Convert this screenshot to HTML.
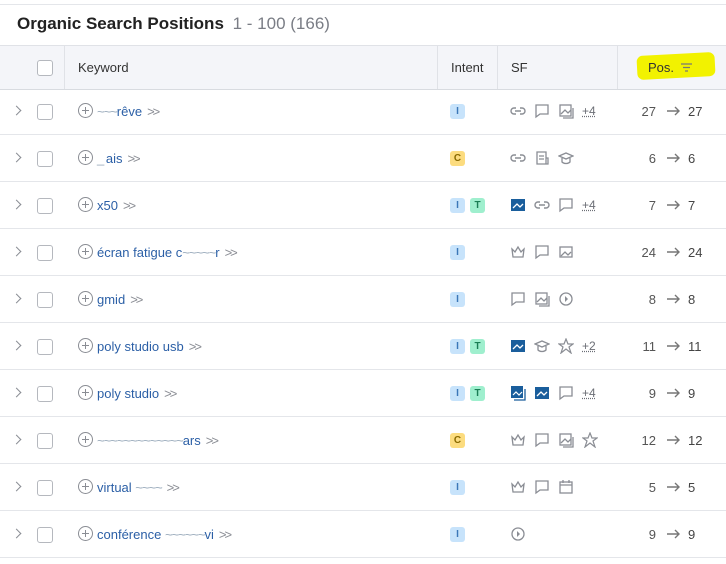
<!DOCTYPE html><html><head><meta charset="utf-8"><style>
body{margin:0;width:726px;height:564px;background:#fff;font-family:"Liberation Sans",sans-serif;overflow:hidden;position:relative}
.top{position:absolute;left:0;top:0;width:726px;height:4px;border-bottom:1px solid #e4e6ea}
.title{position:absolute;left:17px;top:14px;font-size:17px;font-weight:bold;color:#222}
.title span{font-weight:normal;color:#7a7d85;margin-left:4px}
.hdr{position:absolute;left:0;top:45px;width:726px;height:43px;background:#f4f5f9;border-top:1px solid #e0e2e7;border-bottom:1px solid #d8dbe0;font-size:13px;color:#333}
.hdr .t{position:absolute;top:14px}
.hdr .vl{position:absolute;top:0;height:43px;width:1px;background:#e0e2e7}
.row{position:absolute;left:0;width:726px;height:46px;border-bottom:1px solid #e4e6ea;font-size:13px}
.chev{position:absolute;left:13px;top:19px;width:6px;height:6px;border-right:1.5px solid #8a8d94;border-top:1.5px solid #8a8d94;transform:rotate(45deg)}
.cb{position:absolute;left:37px;width:14px;height:14px;border:1px solid #b5b8be;border-radius:3px;background:#fff}
.row .cb{top:16px}
.plus{position:absolute;left:78px;top:15px;width:13px;height:13px;border:1.3px solid #8a8d94;border-radius:50%}
.plus:before{content:"";position:absolute;left:3px;top:6px;width:7px;height:1.3px;background:#8a8d94}
.plus:after{content:"";position:absolute;left:6px;top:3px;width:1.3px;height:7px;background:#8a8d94}
.kw{position:absolute;left:97px;top:16px;color:#2b5fa6}
.kw b{font-weight:normal;color:#8a8d94;margin-left:5px;letter-spacing:-2px}
.bl{color:#9ab;letter-spacing:-1px}
.tag{position:absolute;top:16px;width:15px;height:15px;border-radius:3px;font-size:10px;text-align:center;line-height:15px;font-weight:bold}
.I{background:#c7e3fb;color:#3b77b8}.T{background:#9fefce;color:#1a7e55}.C{background:#fcdc7f;color:#8a6a00}
.sf{position:absolute;top:15px;left:510px;display:flex;gap:8px;align-items:center;color:#8a8d94;font-size:12px}
.sf svg{width:16px;height:16px}
.more{text-decoration:underline dotted;font-size:12px;color:#6b6e75}
.pos{position:absolute;left:620px;top:16px;width:90px;height:16px;color:#555;font-size:13px}
.pos .l{position:absolute;right:54px}
.pos svg{position:absolute;left:46px;top:2px}
.pos .a{position:absolute;left:68px;color:#444}
</style></head><body>
<div class="top"></div>
<div class="title">Organic Search Positions <span>1 - 100 (166)</span></div>
<div class="hdr">
<div class="cb" style="top:14px"></div>
<div class="vl" style="left:64px"></div>
<div class="t" style="left:78px">Keyword</div>
<div class="vl" style="left:437px"></div>
<div class="t" style="left:451px">Intent</div>
<div class="vl" style="left:497px"></div>
<div class="t" style="left:511px">SF</div>
<div class="vl" style="left:617px"></div>
<div style="position:absolute;left:637px;top:8px;width:78px;height:24px;background:#f2f200;border-radius:6px;transform:rotate(-3deg)"></div>
<div class="t" style="left:648px">Pos.</div>
<svg style="position:absolute;left:680px;top:16px" width="13" height="11"><path d="M1 2h11M3 5.5h7M5 9h3" stroke="#777" stroke-width="1.3"/></svg>
</div>
<div class="row" style="top:88px"><div class="chev"></div><div class="cb"></div><div class="plus"></div><div class="kw"><span class="bl">~~~</span>rêve<b>&gt;&gt;</b></div><div class="tag I" style="left:450px">I</div><div class="sf"><svg viewBox="0 0 16 16"><path d="M6 5H4a3 3 0 000 6h2M10 5h2a3 3 0 010 6h-2M5 8h6" stroke="#8a8d94" fill="none" stroke-width="1.4"/></svg><svg viewBox="0 0 16 16"><path d="M2 2h12v9H6l-4 3z" stroke="#8a8d94" fill="none" stroke-width="1.3"/></svg><svg viewBox="0 0 16 16"><rect x="2" y="2" width="11" height="11" stroke="#8a8d94" fill="none" stroke-width="1.3"/><path d="M3 11l4-4 3 3 3-3M15 5v10H5" stroke="#8a8d94" fill="none" stroke-width="1.3"/></svg><span class="more">+4</span></div><div class="pos"><span class="l">27</span><svg width="14" height="10"><path d="M1 5h12M9 1l4 4-4 4" stroke="#777" fill="none" stroke-width="1.4"/></svg><span class="a">27</span></div></div>
<div class="row" style="top:135px"><div class="chev"></div><div class="cb"></div><div class="plus"></div><div class="kw"><span class="bl">_ </span>ais<b>&gt;&gt;</b></div><div class="tag C" style="left:450px">C</div><div class="sf"><svg viewBox="0 0 16 16"><path d="M6 5H4a3 3 0 000 6h2M10 5h2a3 3 0 010 6h-2M5 8h6" stroke="#8a8d94" fill="none" stroke-width="1.4"/></svg><svg viewBox="0 0 16 16"><path d="M3 2h9v12H3zM5 6h5M5 9h5M12 8h2v6h-2" stroke="#8a8d94" fill="none" stroke-width="1.3"/></svg><svg viewBox="0 0 16 16"><path d="M1 6l7-3 7 3-7 3zM4 8v4c2 2 6 2 8 0V8" stroke="#8a8d94" fill="none" stroke-width="1.3"/></svg></div><div class="pos"><span class="l">6</span><svg width="14" height="10"><path d="M1 5h12M9 1l4 4-4 4" stroke="#777" fill="none" stroke-width="1.4"/></svg><span class="a">6</span></div></div>
<div class="row" style="top:182px"><div class="chev"></div><div class="cb"></div><div class="plus"></div><div class="kw">x50<b>&gt;&gt;</b></div><div class="tag I" style="left:450px">I</div><div class="tag T" style="left:470px">T</div><div class="sf"><svg viewBox="0 0 16 16"><rect x="1" y="2" width="14" height="12" fill="#1a5e9c"/><path d="M3 11l4-4 3 3 3-3" stroke="#fff" fill="none" stroke-width="1.3"/></svg><svg viewBox="0 0 16 16"><path d="M6 5H4a3 3 0 000 6h2M10 5h2a3 3 0 010 6h-2M5 8h6" stroke="#8a8d94" fill="none" stroke-width="1.4"/></svg><svg viewBox="0 0 16 16"><path d="M2 2h12v9H6l-4 3z" stroke="#8a8d94" fill="none" stroke-width="1.3"/></svg><span class="more">+4</span></div><div class="pos"><span class="l">7</span><svg width="14" height="10"><path d="M1 5h12M9 1l4 4-4 4" stroke="#777" fill="none" stroke-width="1.4"/></svg><span class="a">7</span></div></div>
<div class="row" style="top:229px"><div class="chev"></div><div class="cb"></div><div class="plus"></div><div class="kw">écran fatigue c<span class="bl">~~~~~</span>r<b>&gt;&gt;</b></div><div class="tag I" style="left:450px">I</div><div class="sf"><svg viewBox="0 0 16 16"><path d="M2 5l3 3 3-5 3 5 3-3-1 8H3z" stroke="#8a8d94" fill="none" stroke-width="1.3"/></svg><svg viewBox="0 0 16 16"><path d="M2 2h12v9H6l-4 3z" stroke="#8a8d94" fill="none" stroke-width="1.3"/></svg><svg viewBox="0 0 16 16"><rect x="2" y="3" width="12" height="10" stroke="#8a8d94" fill="none" stroke-width="1.3"/><path d="M3 12l4-4 3 3 3-3" stroke="#8a8d94" fill="none" stroke-width="1.3"/></svg></div><div class="pos"><span class="l">24</span><svg width="14" height="10"><path d="M1 5h12M9 1l4 4-4 4" stroke="#777" fill="none" stroke-width="1.4"/></svg><span class="a">24</span></div></div>
<div class="row" style="top:276px"><div class="chev"></div><div class="cb"></div><div class="plus"></div><div class="kw">gmid<b>&gt;&gt;</b></div><div class="tag I" style="left:450px">I</div><div class="sf"><svg viewBox="0 0 16 16"><path d="M2 2h12v9H6l-4 3z" stroke="#8a8d94" fill="none" stroke-width="1.3"/></svg><svg viewBox="0 0 16 16"><rect x="2" y="2" width="11" height="11" stroke="#8a8d94" fill="none" stroke-width="1.3"/><path d="M3 11l4-4 3 3 3-3M15 5v10H5" stroke="#8a8d94" fill="none" stroke-width="1.3"/></svg><svg viewBox="0 0 16 16"><circle cx="8" cy="8" r="6" stroke="#8a8d94" fill="none" stroke-width="1.3"/><path d="M7 5l3 3-3 3z" fill="#8a8d94"/></svg></div><div class="pos"><span class="l">8</span><svg width="14" height="10"><path d="M1 5h12M9 1l4 4-4 4" stroke="#777" fill="none" stroke-width="1.4"/></svg><span class="a">8</span></div></div>
<div class="row" style="top:323px"><div class="chev"></div><div class="cb"></div><div class="plus"></div><div class="kw">poly studio usb<b>&gt;&gt;</b></div><div class="tag I" style="left:450px">I</div><div class="tag T" style="left:470px">T</div><div class="sf"><svg viewBox="0 0 16 16"><rect x="1" y="2" width="14" height="12" fill="#1a5e9c"/><path d="M3 11l4-4 3 3 3-3" stroke="#fff" fill="none" stroke-width="1.3"/></svg><svg viewBox="0 0 16 16"><path d="M1 6l7-3 7 3-7 3zM4 8v4c2 2 6 2 8 0V8" stroke="#8a8d94" fill="none" stroke-width="1.3"/></svg><svg viewBox="0 0 16 16"><path d="M8 1l2 5h5l-4 3 2 6-5-4-5 4 2-6-4-3h5z" stroke="#8a8d94" fill="none" stroke-width="1.2"/></svg><span class="more">+2</span></div><div class="pos"><span class="l">11</span><svg width="14" height="10"><path d="M1 5h12M9 1l4 4-4 4" stroke="#777" fill="none" stroke-width="1.4"/></svg><span class="a">11</span></div></div>
<div class="row" style="top:370px"><div class="chev"></div><div class="cb"></div><div class="plus"></div><div class="kw">poly studio<b>&gt;&gt;</b></div><div class="tag I" style="left:450px">I</div><div class="tag T" style="left:470px">T</div><div class="sf"><svg viewBox="0 0 16 16"><rect x="1" y="1" width="12" height="12" fill="#1a5e9c"/><path d="M15 4v11H4" stroke="#1a5e9c" fill="none" stroke-width="1.3"/><path d="M3 10l3-3 3 3 3-3" stroke="#fff" fill="none" stroke-width="1.2"/></svg><svg viewBox="0 0 16 16"><rect x="1" y="2" width="14" height="12" fill="#1a5e9c"/><path d="M3 11l4-4 3 3 3-3" stroke="#fff" fill="none" stroke-width="1.3"/></svg><svg viewBox="0 0 16 16"><path d="M2 2h12v9H6l-4 3z" stroke="#8a8d94" fill="none" stroke-width="1.3"/></svg><span class="more">+4</span></div><div class="pos"><span class="l">9</span><svg width="14" height="10"><path d="M1 5h12M9 1l4 4-4 4" stroke="#777" fill="none" stroke-width="1.4"/></svg><span class="a">9</span></div></div>
<div class="row" style="top:417px"><div class="chev"></div><div class="cb"></div><div class="plus"></div><div class="kw"><span class="bl">~~~~~~~~~~~~~</span>ars<b>&gt;&gt;</b></div><div class="tag C" style="left:450px">C</div><div class="sf"><svg viewBox="0 0 16 16"><path d="M2 5l3 3 3-5 3 5 3-3-1 8H3z" stroke="#8a8d94" fill="none" stroke-width="1.3"/></svg><svg viewBox="0 0 16 16"><path d="M2 2h12v9H6l-4 3z" stroke="#8a8d94" fill="none" stroke-width="1.3"/></svg><svg viewBox="0 0 16 16"><rect x="2" y="2" width="11" height="11" stroke="#8a8d94" fill="none" stroke-width="1.3"/><path d="M3 11l4-4 3 3 3-3M15 5v10H5" stroke="#8a8d94" fill="none" stroke-width="1.3"/></svg><svg viewBox="0 0 16 16"><path d="M8 1l2 5h5l-4 3 2 6-5-4-5 4 2-6-4-3h5z" stroke="#8a8d94" fill="none" stroke-width="1.2"/></svg></div><div class="pos"><span class="l">12</span><svg width="14" height="10"><path d="M1 5h12M9 1l4 4-4 4" stroke="#777" fill="none" stroke-width="1.4"/></svg><span class="a">12</span></div></div>
<div class="row" style="top:464px"><div class="chev"></div><div class="cb"></div><div class="plus"></div><div class="kw">virtual <span class="bl">~~~~</span><b>&gt;&gt;</b></div><div class="tag I" style="left:450px">I</div><div class="sf"><svg viewBox="0 0 16 16"><path d="M2 5l3 3 3-5 3 5 3-3-1 8H3z" stroke="#8a8d94" fill="none" stroke-width="1.3"/></svg><svg viewBox="0 0 16 16"><path d="M2 2h12v9H6l-4 3z" stroke="#8a8d94" fill="none" stroke-width="1.3"/></svg><svg viewBox="0 0 16 16"><rect x="2" y="3" width="12" height="11" stroke="#8a8d94" fill="none" stroke-width="1.3"/><path d="M2 6h12M5 1v3M11 1v3" stroke="#8a8d94" stroke-width="1.3"/></svg></div><div class="pos"><span class="l">5</span><svg width="14" height="10"><path d="M1 5h12M9 1l4 4-4 4" stroke="#777" fill="none" stroke-width="1.4"/></svg><span class="a">5</span></div></div>
<div class="row" style="top:511px"><div class="chev"></div><div class="cb"></div><div class="plus"></div><div class="kw">conférence <span class="bl">~~~~~~</span>vi<b>&gt;&gt;</b></div><div class="tag I" style="left:450px">I</div><div class="sf"><svg viewBox="0 0 16 16"><circle cx="8" cy="8" r="6" stroke="#8a8d94" fill="none" stroke-width="1.3"/><path d="M7 5l3 3-3 3z" fill="#8a8d94"/></svg></div><div class="pos"><span class="l">9</span><svg width="14" height="10"><path d="M1 5h12M9 1l4 4-4 4" stroke="#777" fill="none" stroke-width="1.4"/></svg><span class="a">9</span></div></div>
</body></html>
